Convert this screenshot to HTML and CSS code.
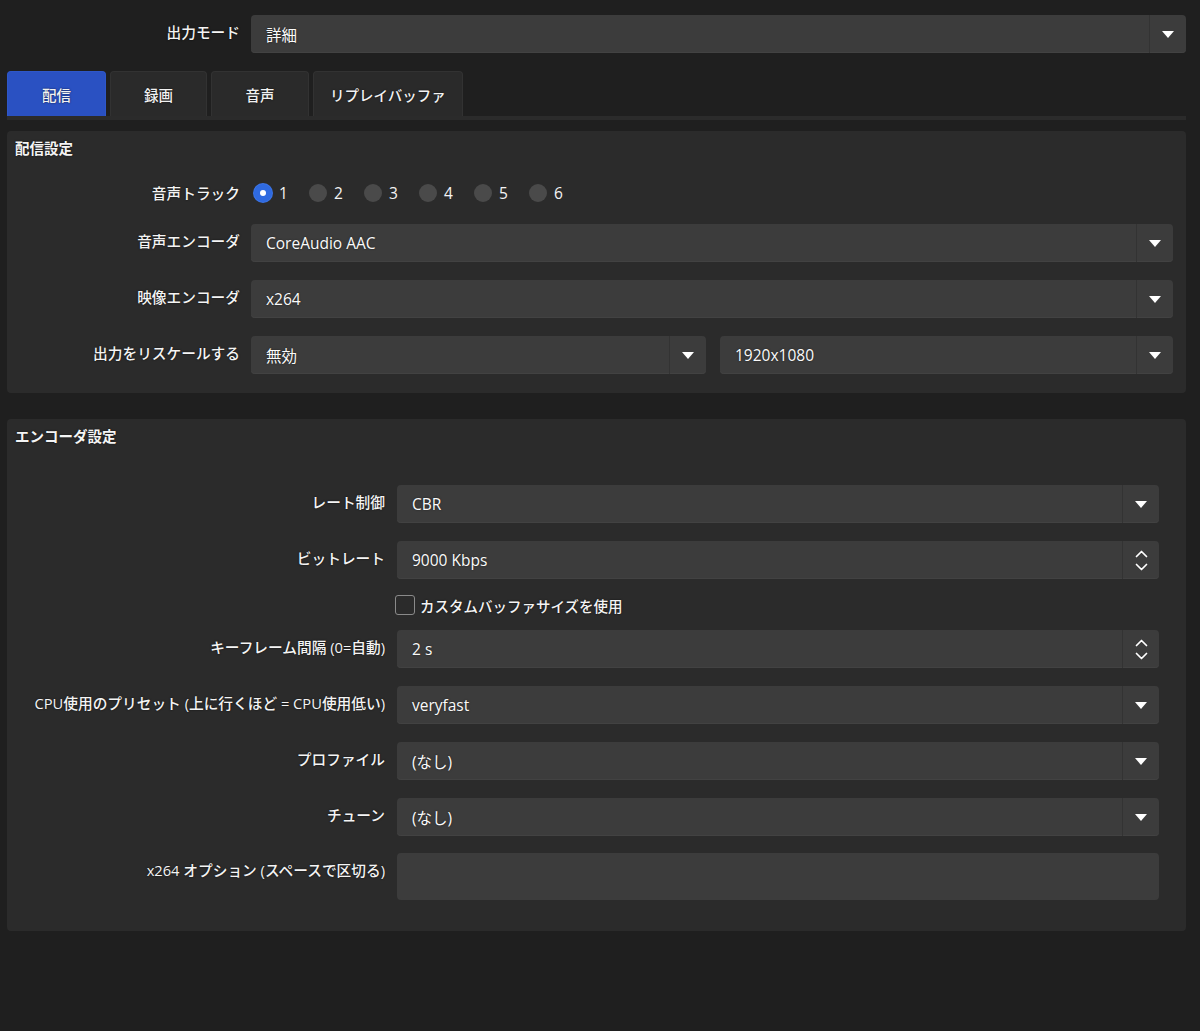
FILE: index.html
```html
<!DOCTYPE html>
<html lang="ja">
<head>
<meta charset="utf-8">
<title>出力設定</title>
<link rel="stylesheet" href="styles.css">
</head>
<body>
<div class="page">
  <div class="mode-row">
    <div class="label">出力モード</div>
    <div class="select"><span class="value">詳細</span><span class="drop"><span class="tri"></span></span></div>
  </div>

  <div class="tabs">
    <div class="tab active">配信</div>
    <div class="tab">録画</div>
    <div class="tab">音声</div>
    <div class="tab tab-wide">リプレイバッファ</div>
  </div>

  <section class="panel panel-stream">
    <h2 class="panel-title">配信設定</h2>
    <div class="form">
      <div class="row radio-row">
        <div class="label">音声トラック</div>
        <div class="radios">
          <span class="radio-item"><span class="radio checked"></span><span class="num">1</span></span>
          <span class="radio-item"><span class="radio"></span><span class="num">2</span></span>
          <span class="radio-item"><span class="radio"></span><span class="num">3</span></span>
          <span class="radio-item"><span class="radio"></span><span class="num">4</span></span>
          <span class="radio-item"><span class="radio"></span><span class="num">5</span></span>
          <span class="radio-item"><span class="radio"></span><span class="num">6</span></span>
        </div>
      </div>
      <div class="row">
        <div class="label">音声エンコーダ</div>
        <div class="select"><span class="value">CoreAudio AAC</span><span class="drop"><span class="tri"></span></span></div>
      </div>
      <div class="row">
        <div class="label">映像エンコーダ</div>
        <div class="select"><span class="value">x264</span><span class="drop"><span class="tri"></span></span></div>
      </div>
      <div class="row">
        <div class="label">出力をリスケールする</div>
        <div class="pair">
          <div class="select"><span class="value">無効</span><span class="drop"><span class="tri"></span></span></div>
          <div class="select"><span class="value">1920x1080</span><span class="drop"><span class="tri"></span></span></div>
        </div>
      </div>
    </div>
  </section>

  <section class="panel panel-encoder">
    <h2 class="panel-title">エンコーダ設定</h2>
    <div class="form">
      <div class="row">
        <div class="label">レート制御</div>
        <div class="select"><span class="value">CBR</span><span class="drop"><span class="tri"></span></span></div>
      </div>
      <div class="row">
        <div class="label">ビットレート</div>
        <div class="select spin"><span class="value">9000 Kbps</span><span class="drop spin-btns">
          <svg class="chev" width="13" height="8" viewBox="0 0 13 8"><polyline points="1.5,6.5 6.5,1.5 11.5,6.5" fill="none" stroke="#fff" stroke-width="1.7" stroke-linecap="round" stroke-linejoin="round"/></svg>
          <svg class="chev" width="13" height="8" viewBox="0 0 13 8"><polyline points="1.5,1.5 6.5,6.5 11.5,1.5" fill="none" stroke="#fff" stroke-width="1.7" stroke-linecap="round" stroke-linejoin="round"/></svg>
        </span></div>
      </div>
      <div class="row check-row">
        <div class="label"></div>
        <div class="check"><span class="box"></span><span class="check-text">カスタムバッファサイズを使用</span></div>
      </div>
      <div class="row">
        <div class="label">キーフレーム間隔 (0=自動)</div>
        <div class="select spin"><span class="value">2 s</span><span class="drop spin-btns">
          <svg class="chev" width="13" height="8" viewBox="0 0 13 8"><polyline points="1.5,6.5 6.5,1.5 11.5,6.5" fill="none" stroke="#fff" stroke-width="1.7" stroke-linecap="round" stroke-linejoin="round"/></svg>
          <svg class="chev" width="13" height="8" viewBox="0 0 13 8"><polyline points="1.5,1.5 6.5,6.5 11.5,1.5" fill="none" stroke="#fff" stroke-width="1.7" stroke-linecap="round" stroke-linejoin="round"/></svg>
        </span></div>
      </div>
      <div class="row">
        <div class="label">CPU使用のプリセット (上に行くほど = CPU使用低い)</div>
        <div class="select"><span class="value">veryfast</span><span class="drop"><span class="tri"></span></span></div>
      </div>
      <div class="row">
        <div class="label">プロファイル</div>
        <div class="select"><span class="value">(なし)</span><span class="drop"><span class="tri"></span></span></div>
      </div>
      <div class="row">
        <div class="label">チューン</div>
        <div class="select"><span class="value">(なし)</span><span class="drop"><span class="tri"></span></span></div>
      </div>
      <div class="row text-row">
        <div class="label">x264 オプション (スペースで区切る)</div>
        <div class="textarea"></div>
      </div>
    </div>
  </section>
</div>
</body>
</html>
```

FILE: styles.css
```css
* { box-sizing: border-box; }

html, body {
  margin: 0;
  padding: 0;
  background: #1f1f1f;
}

body {
  font-family: "Open Sans", "Noto Sans CJK JP", sans-serif;
  font-size: 14.5px;
  color: #f2f2f2;
}

.page {
  padding: 15px 14px 0 7px;
}

.label {
  text-align: right;
  font-size: 14.7px;
  font-weight: 500;
  line-height: 35px;
  white-space: nowrap;
  color: #f4f4f4;
  text-shadow: 0 0 2px rgba(0, 0, 0, 0.7);
}

/* top mode row */
.mode-row {
  display: grid;
  grid-template-columns: 233px 1fr;
  column-gap: 11px;
}

/* selects */
.select {
  display: flex;
  align-items: center;
  height: 38px;
  background: #3c3c3c;
  border-radius: 4px;
  box-shadow: inset 0 -1px 0 #424242;
}

.select .value {
  flex: 1;
  padding-left: 15px;
  font-size: 15.5px;
  color: #fafafa;
  white-space: nowrap;
  text-shadow: 0 0 2px rgba(0, 0, 0, 0.5);
}

.drop {
  width: 37px;
  height: 100%;
  display: flex;
  align-items: center;
  justify-content: center;
  border-left: 1px solid #333333;
}

.tri {
  width: 0;
  height: 0;
  border-left: 6px solid transparent;
  border-right: 6px solid transparent;
  border-top: 7px solid #ffffff;
}

.spin-btns {
  flex-direction: column;
  gap: 5px;
}

.chev { display: block; }

/* tabs */
.tabs {
  display: flex;
  gap: 4px;
  margin-top: 18px;
  border-bottom: 4px solid #2b2b2b;
}

.tab {
  min-width: 98px;
  height: 45px;
  padding: 0 24px;
  display: flex;
  align-items: center;
  justify-content: center;
  background: #2a2a2a;
  border: 1px solid #323232;
  border-bottom: none;
  border-radius: 4px 4px 0 0;
  font-weight: 500;
  color: #f2f2f2;
  text-shadow: 0 0 2px rgba(0, 0, 0, 0.7);
}

.tab:first-child { min-width: 99px; }
.tab:nth-child(2) { min-width: 97px; }
.tab-wide { padding: 0 16px; }

.tab.active {
  background: #2a51c2;
  border-color: #2e57c9;
}

/* panels */
.panel {
  background: #2b2b2b;
  border-radius: 4px;
}

.panel-title {
  margin: 0;
  padding-left: 8px;
  font-size: 14.5px;
  font-weight: 700;
  line-height: 20px;
  color: #f4f4f4;
  text-shadow: 0 0 2px rgba(0, 0, 0, 0.7);
}

.panel-stream {
  margin-top: 11px;
  padding: 8px 13px 19px 0;
}

.panel-encoder {
  margin-top: 26px;
  padding: 8px 27px 31px 0;
}

.form {
  display: flex;
  flex-direction: column;
  gap: 18px;
}

.panel-stream .form { margin-top: 21px; }
.panel-encoder .form { margin-top: 38px; }

.row {
  display: grid;
  align-items: start;
}

.panel-stream .row {
  grid-template-columns: 233px 1fr;
  column-gap: 11px;
}

.panel-encoder .row {
  grid-template-columns: 378px 1fr;
  column-gap: 12px;
}

/* radios */
.radio-row { height: 26px; }
.radio-row .label { line-height: 26px; }

.radios {
  display: grid;
  grid-template-columns: repeat(6, 55px);
  height: 26px;
  align-items: center;
  margin-left: 3px;
}

.radio-item {
  display: flex;
  align-items: center;
  gap: 7px;
}

.radio {
  width: 18px;
  height: 18px;
  border-radius: 50%;
  background: #4a4a4a;
  display: flex;
  align-items: center;
  justify-content: center;
}

.radio.checked {
  background: #2f6ae0;
  box-shadow: 0 0 0 1px #3b74e6;
}

.radio.checked::after {
  content: "";
  width: 6px;
  height: 6px;
  border-radius: 50%;
  background: #ffffff;
}

.num {
  font-size: 15.5px;
  color: #f4f4f4;
}

.pair {
  display: grid;
  grid-template-columns: 455px 1fr;
  column-gap: 14px;
}

/* checkbox */
.check-row { margin: -2px 0 -3px; }

.check {
  display: flex;
  align-items: center;
  height: 20px;
  margin-left: -2px;
}

.box {
  width: 20px;
  height: 20px;
  border: 1.5px solid #8a8a8a;
  border-radius: 3px;
  margin-right: 5px;
}

.check-text {
  font-weight: 500;
  color: #f4f4f4;
  text-shadow: 0 0 2px rgba(0, 0, 0, 0.7);
}

/* textarea */
.text-row { margin-top: -1px; }

.textarea {
  height: 47px;
  background: #3c3c3c;
  border-radius: 4px;
}
```
